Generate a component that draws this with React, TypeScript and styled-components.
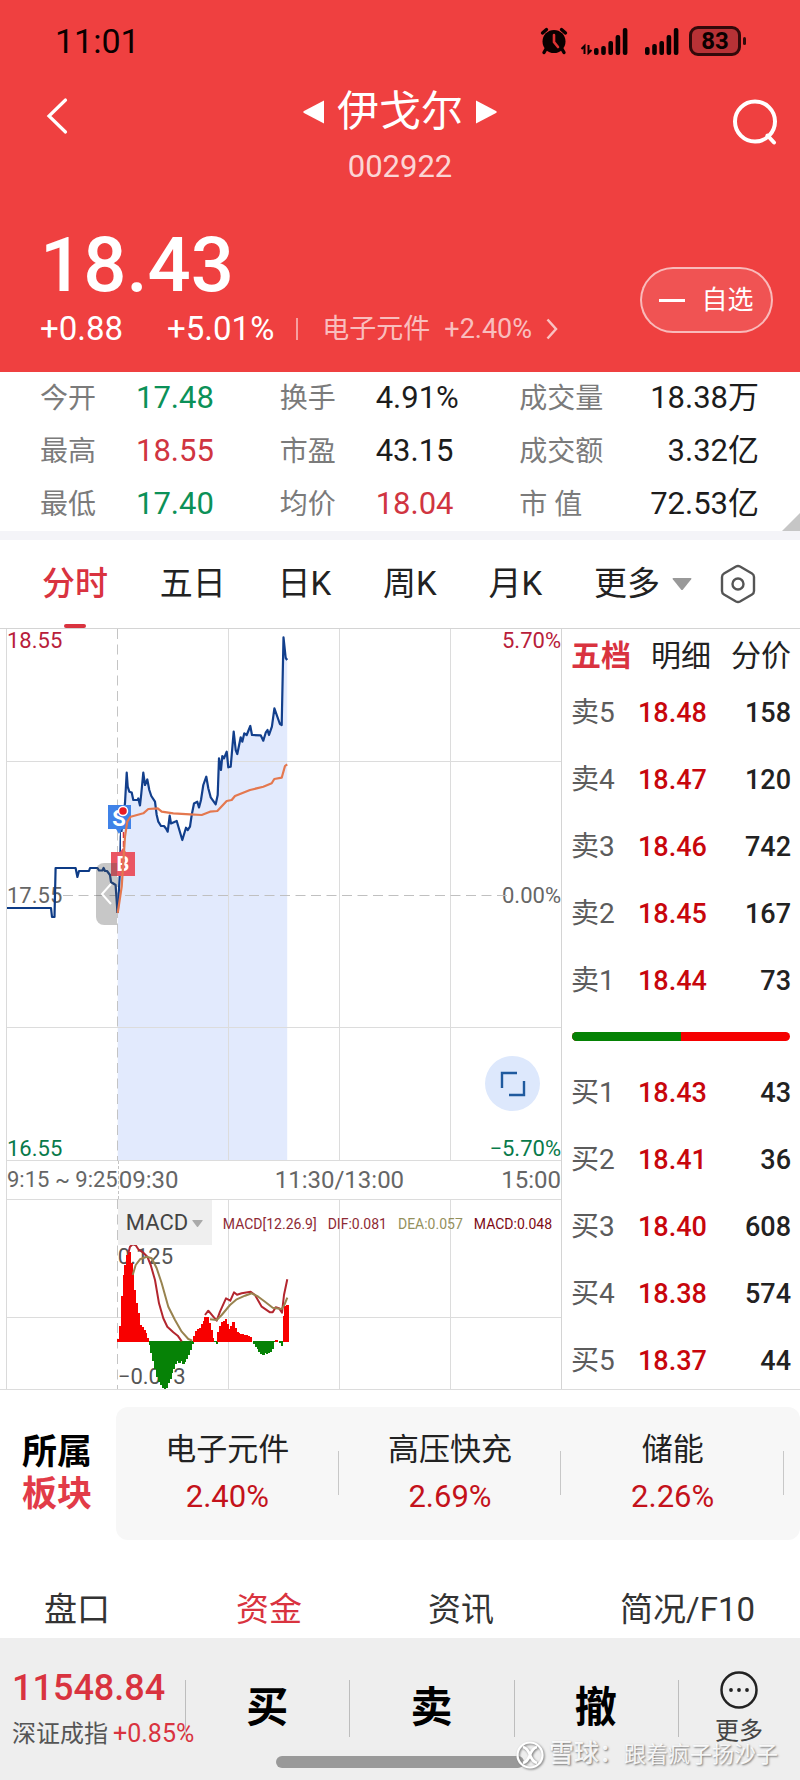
import React from "react";
import styled, { createGlobalStyle, css } from "styled-components";

const GlobalStyle = createGlobalStyle`
  *, *::before, *::after { box-sizing: border-box; }
  body {
    margin: 0;
    background: #fff;
    color: #222;
    font-family: Roboto, "Noto Sans CJK SC", sans-serif;
    line-height: 1.25;
  }
  h1, p, dl, dd, dt { margin: 0; font-weight: 400; }
  button, select {
    margin: 0;
    padding: 0;
    border: 0;
    background: none;
    color: inherit;
    font: inherit;
    cursor: pointer;
  }
  a { color: inherit; text-decoration: none; }
  svg { display: block; flex: none; }
`;

const RED = "#d9333f";
const GREEN = "#0b9158";

type Tone = "up" | "down" | "plain";
const toneColor: Record<Tone, string> = { up: "#d03541", down: GREEN, plain: "#1c1c1c" };

/* ---------- Header ---------- */

const Header = styled.header`
  background: #ef4040;
  color: #fff;
  padding-bottom: 23px;
`;

const StatusBar = styled.div`
  display: flex;
  align-items: center;
  justify-content: space-between;
  height: 82px;
  padding: 0 54px 0 55px;
  color: #0a0000;
  font-size: 34px;
`;

const StatusIcons = styled.div`
  display: flex;
  align-items: center;
  gap: 12px;
`;

const BatteryBox = styled.div`
  position: relative;
  width: 52px;
  height: 30px;
  margin: 0 5px 0 -2px;
  border: 3px solid #33090a;
  border-radius: 9px;
  background: #b83236;
  color: #0a0000;
  font-size: 24px;
  font-weight: 700;
  line-height: 24px;
  text-align: center;

  &::after {
    content: "";
    position: absolute;
    right: -8px;
    top: 8px;
    width: 3px;
    height: 8px;
    border-radius: 2px;
    background: #33090a;
  }
`;

const NavBar = styled.nav`
  display: grid;
  grid-template-columns: 1fr auto 1fr;
  align-items: start;
  padding-top: 5px;
`;

const NavButton = styled.button<{ $end?: boolean }>`
  justify-self: ${(p) => (p.$end ? "end" : "start")};
  margin: ${(p) => (p.$end ? "12px 22px 0 0" : "10px 0 0 46px")};
`;

const TitleBlock = styled.div`
  display: flex;
  flex-direction: column;
  align-items: center;
  gap: 10px;
`;

const TitleRow = styled.div`
  display: flex;
  align-items: center;
  gap: 12px;
`;

const StockName = styled.h1`
  font-size: 42px;
  line-height: 50px;
`;

const StockCode = styled.p`
  font-size: 31px;
  line-height: 40px;
  color: rgba(255, 255, 255, 0.8);
`;

const QuoteBar = styled.div`
  display: flex;
  justify-content: space-between;
  align-items: flex-end;
  padding: 38px 27px 0 40px;
`;

const LastPrice = styled.p`
  font-size: 76px;
  font-weight: 500;
  line-height: 80px;
  margin-bottom: 4px;
`;

const ChangeRow = styled.div`
  display: flex;
  align-items: center;
  line-height: 40px;
  font-size: 33px;
`;

const ChangeValue = styled.span`
  margin-right: 44px;
  & + & { margin-right: 22px; }
`;

const IndustryLink = styled.a`
  display: flex;
  align-items: center;
  gap: 14px;
  font-size: 27px;
  color: rgba(255, 255, 255, 0.68);

  &::before {
    content: "";
    width: 2px;
    height: 22px;
    margin-right: 10px;
    background: rgba(255, 255, 255, 0.5);
  }
`;

const FavoriteButton = styled.button`
  display: flex;
  align-items: center;
  justify-content: center;
  gap: 16px;
  width: 133px;
  height: 66px;
  margin-bottom: 16px;
  border: 2px solid rgba(255, 255, 255, 0.6);
  border-radius: 33px;
  background: rgba(255, 255, 255, 0.1);
  font-size: 26px;

  &::before {
    content: "";
    width: 26px;
    height: 3px;
    background: #fff;
  }
`;

/* ---------- Key figures ---------- */

const Stats = styled.dl`
  position: relative;
  display: grid;
  grid-template-columns: repeat(3, 1fr);
  padding: 0 41px 0 40px;
  border-bottom: 9px solid #f4f4f8;

  &::after {
    content: "";
    position: absolute;
    right: 0;
    bottom: 0;
    border: 9px solid #c6c6c6;
    border-top-color: transparent;
    border-left-color: transparent;
  }
`;

const Stat = styled.div<{ $spread?: boolean }>`
  display: flex;
  align-items: center;
  justify-content: ${(p) => (p.$spread ? "space-between" : "flex-start")};
  height: 53px;
  white-space: nowrap;
`;

const StatLabel = styled.dt`
  min-width: 96px;
  font-size: 28px;
  color: #7b7b7b;
`;

const StatValue = styled.dd<{ $tone: Tone }>`
  font-size: 31px;
  color: ${(p) => toneColor[p.$tone]};
`;

/* ---------- Period tabs ---------- */

const PeriodBar = styled.div`
  display: flex;
  align-items: center;
  gap: 28px;
  height: 88px;
  padding: 0 44px 0 42px;
`;

const PeriodTabs = styled.div`
  flex: 1;
  display: flex;
  justify-content: space-between;
`;

const PeriodTab = styled.button<{ $active?: boolean }>`
  position: relative;
  display: flex;
  align-items: center;
  gap: 12px;
  height: 88px;
  font-size: 33px;
  color: ${(p) => (p.$active ? RED : "#222")};
  font-weight: ${(p) => (p.$active ? 500 : 400)};

  ${(p) =>
    p.$active &&
    css`
      &::after {
        content: "";
        position: absolute;
        left: 22px;
        bottom: 0;
        width: 22px;
        height: 4px;
        border-radius: 2px;
        background: ${RED};
      }
    `}
`;

/* ---------- Market area ---------- */

const Market = styled.section`
  display: grid;
  grid-template-columns: minmax(0, 1fr) 239px;
  padding-left: 6px;
  border-top: 1px solid #d4d4d4;
  border-bottom: 1px solid #dcdcdc;
`;

const ChartColumn = styled.div`
  border-left: 1px solid #dadada;
`;

const Pane = styled.div`
  position: relative;
  & > svg {
    position: relative;
    width: 100%;
    height: auto;
  }
`;

const ScaleLabel = styled.span<{ $side: "left" | "right"; $at: "top" | "middle" | "bottom"; $color: string }>`
  position: absolute;
  ${(p) => p.$side}: 0;
  ${(p) => (p.$at === "middle" ? "top: 50%; margin-top: -11px;" : `${p.$at}: 0;`)}
  font-size: 22px;
  line-height: 24px;
  color: ${(p) => p.$color};
`;

const CollapseHandle = styled.button`
  position: absolute;
  left: 16%;
  top: 44%;
  width: 21px;
  height: 62px;
  display: grid;
  place-items: center;
  border-radius: 8px 0 0 8px;
  background: rgba(80, 80, 80, 0.32);
`;

const ExpandButton = styled.button`
  position: absolute;
  right: 21px;
  bottom: 50px;
  display: grid;
  place-items: center;
  width: 55px;
  height: 55px;
  border-radius: 50%;
  background: #dde8fc;
`;

const TimeAxis = styled.div`
  display: grid;
  grid-template-columns: repeat(5, 1fr);
  align-items: center;
  height: 38px;
  font-size: 24px;
  color: #666;
  white-space: nowrap;
`;

const AuctionTime = styled.span`
  font-size: 22px;
`;

const OpenTime = styled.span`
  height: 38px;
  line-height: 38px;
  border-left: 1px dashed #c4c4c4;
`;

const MiddayTime = styled.span`
  grid-column: span 2;
  text-align: center;
`;

const CloseTime = styled.span`
  text-align: right;
`;

const IndicatorBar = styled.div`
  position: absolute;
  z-index: 1;
  left: 20%;
  right: 0;
  top: 1px;
  display: flex;
  align-items: center;
  gap: 11px;
  white-space: nowrap;
`;

const IndicatorPicker = styled.label`
  position: relative;
  display: block;
  background: #efefef;
  color: #444;

  select {
    appearance: none;
    display: block;
    width: 94px;
    height: 45px;
    padding-left: 8px;
    font-size: 22px;
  }
  svg {
    position: absolute;
    right: 9px;
    top: 20px;
    pointer-events: none;
  }
`;

const IndicatorValue = styled.span<{ $color: string }>`
  padding-top: 4px;
  font-size: 14px;
  color: ${(p) => p.$color};
`;

const MacdScale = styled.span<{ $low?: boolean }>`
  position: absolute;
  left: 20%;
  ${(p) => (p.$low ? "bottom: 0;" : "top: 46px;")}
  font-size: 22px;
  line-height: 24px;
  color: #555;
`;

/* ---------- Order book ---------- */

const Book = styled.aside`
  border-left: 1px solid #d4d4d4;
  padding: 7px 9px 12px;
`;

const BookTabs = styled.div`
  display: flex;
  justify-content: space-between;
  margin-bottom: 21px;
`;

const BookTab = styled.button<{ $active?: boolean }>`
  font-size: 30px;
  line-height: 40px;
  font-weight: ${(p) => (p.$active ? 700 : 400)};
  color: ${(p) => (p.$active ? RED : "#222")};
`;

const Levels = styled.table`
  width: 100%;
  border-collapse: collapse;
  font-size: 27px;
  line-height: 32px;

  th, td { padding: 0; text-align: left; font-weight: 500; }
  tr + tr > * { padding-top: 35px; }
`;

const LevelName = styled.th`
  width: 67px;
  && { font-weight: 400; }
  font-size: 28px;
  color: #5c5c5c;
`;

const LevelPrice = styled.td`
  color: #c8060c;
`;

const LevelVolume = styled.td`
  && { text-align: right; }
`;

const RatioBar = styled.div`
  display: flex;
  height: 9px;
  margin: 35px 1px 36px;
  border-radius: 5px;
  overflow: hidden;
  background: #f50000;

  &::before {
    content: "";
    width: 50%;
    background: #058205;
  }
`;

/* ---------- Sectors ---------- */

const Sectors = styled.section`
  display: flex;
  align-items: center;
  margin-top: 17px;
`;

const SectorTitle = styled.p`
  flex: none;
  width: 116px;
  padding-left: 22px;
  font-size: 35px;
  font-weight: 700;
  line-height: 42px;
  color: #000;

  span { display: block; color: #e23b48; }
`;

const SectorList = styled.div`
  flex: 1;
  display: grid;
  grid-template-columns: repeat(3, 1fr);
  align-items: center;
  height: 133px;
  padding-right: 16px;
  border-radius: 12px;
  background: #f7f7f7;
`;

const SectorItem = styled.a`
  position: relative;
  display: flex;
  flex-direction: column;
  align-items: center;
  gap: 11px;
  font-size: 31px;
  line-height: 36px;

  &::after {
    content: "";
    position: absolute;
    right: 0;
    top: 19px;
    width: 1px;
    height: 44px;
    background: #c8c8c8;
  }
  span { color: #c4121b; }
`;

/* ---------- Info tabs ---------- */

const InfoTabs = styled.div`
  display: flex;
  justify-content: space-between;
  padding: 50px 45px 8px 44px;
`;

const InfoTab = styled.button<{ $active?: boolean }>`
  font-size: 33px;
  line-height: 40px;
  color: ${(p) => (p.$active ? RED : "#333")};
`;

/* ---------- Footer ---------- */

const Footer = styled.footer`
  position: relative;
  padding: 30px 0 12px;
  background: #eee;
`;

const TradeRow = styled.div`
  display: grid;
  grid-template-columns: 185px repeat(3, 1fr) 122px;
  height: 80px;
  margin-bottom: 8px;
`;

const MarketIndex = styled.a`
  display: flex;
  flex-direction: column;
  gap: 12px;
  padding-left: 12px;
  font-size: 24px;
  line-height: 28px;
  color: #555;
  white-space: nowrap;

  strong {
    font-size: 36px;
    font-weight: 500;
    line-height: 40px;
    color: ${RED};
  }
  em { margin-left: 5px; font-size: 25px; font-style: normal; color: ${RED}; }
`;

const TradeCell = styled.button<{ $small?: boolean }>`
  position: relative;
  display: flex;
  flex-direction: column;
  align-items: center;
  justify-content: center;
  gap: 8px;
  color: ${(p) => (p.$small ? "#444" : "#000")};
  font-size: ${(p) => (p.$small ? 24 : 42)}px;
  font-weight: ${(p) => (p.$small ? 400 : 700)};
  line-height: ${(p) => (p.$small ? 28 : 48)}px;

  &::before {
    content: "";
    position: absolute;
    left: 0;
    top: 12px;
    width: 1px;
    height: 57px;
    background: #bdbdbd;
  }
`;

const HomeIndicator = styled.div`
  width: 31%;
  height: 12px;
  margin: 0 auto;
  border-radius: 6px;
  background: #999;
`;

const Watermark = styled.div`
  position: absolute;
  right: 22px;
  bottom: 11px;
  display: flex;
  align-items: center;
  gap: 5px;
  font-size: 22px;
  line-height: 28px;
  color: rgba(255, 255, 255, 0.9);
  text-shadow: 1px 1px 2px #777;

  strong { font-size: 25px; font-weight: 500; }
  svg { filter: drop-shadow(1px 1px 1px #777); }
`;

/* ---------- Icons ---------- */

const AlarmIcon = () => (
  <svg width="28" height="28" viewBox="0 0 28 28">
    <path d="M2.500 6 6.500 2.500M21.500 2.500l4 3.500M6 22l-2 3.500M22 22l2 3.500" stroke="#0a0000" strokeWidth="3.400" strokeLinecap="round" />
    <circle cx="14" cy="14.500" r="11.500" fill="#0a0000" />
    <path d="M14 8v7l4 5" stroke="#d33" strokeWidth="2.600" fill="none" strokeLinecap="round" />
  </svg>
);

const SignalIcon = ({ data = false }: { data?: boolean }) => {
  const bars = data ? [7, 9, 14, 20, 27] : [8, 11, 14, 20, 27];
  const x0 = data ? 14 : 0;
  const width = data ? 53 : 34;
  return (
    <svg width={width} height="28" viewBox={`0 0 ${width} 28`} stroke="#0a0000" fill="none">
      {data && <path d="M4.500 27v-8l-3 3M8.500 18v8l3-3" strokeWidth="2" />}
      {bars.map((h, i) => (
        <rect key={i} x={x0 + i * 7.2} y={28 - h} width="4.600" height={h} rx="2" fill="#0a0000" stroke="none" />
      ))}
    </svg>
  );
};

const BackIcon = () => (
  <svg width="22" height="38" viewBox="0 0 22 38" fill="none" stroke="#fff" strokeWidth="3.200" strokeLinecap="round">
    <path d="M19.500 3 3 19l16.500 16" />
  </svg>
);

const SearchIcon = () => (
  <svg width="45" height="46" viewBox="0 0 45 46" fill="none" stroke="#fff" strokeWidth="4" strokeLinecap="round">
    <circle cx="22" cy="22.500" r="20" />
    <path d="m34.500 36.500 6.500 7" />
  </svg>
);

const SideArrow = ({ right = false }: { right?: boolean }) => (
  <svg width="22" height="26" viewBox="0 0 22 26" fill="#fff">
    <path d={right ? "M1 1.500v23L21 14q1.500-1 0-2z" : "M21 1.500v23L1 14q-1.500-1 0-2z"} />
  </svg>
);

const ChevronRight = () => (
  <svg width="12" height="22" viewBox="0 0 12 22" fill="none" stroke="currentColor" strokeWidth="2.500">
    <path d="m1.500 1.500 8.500 9.500-8.500 9.500" />
  </svg>
);

const CaretDown = ({ width, height, fill }: { width: number; height: number; fill: string }) => (
  <svg width={width} height={height} viewBox="0 0 20 12" preserveAspectRatio="none" fill={fill}>
    <path d="M1.500 0h17q1.500 0 .7 1.200L11 11.500q-1 1-2 0L.8 1.200Q0 0 1.500 0z" />
  </svg>
);

const HexIcon = () => (
  <svg width="36" height="40" viewBox="0 0 36 40" fill="none" stroke="#555" strokeWidth="2.400" strokeLinejoin="round">
    <path d="M16 2.500q2-1 4 0l12 7q2 1.200 2 3.500v14q0 2.300-2 3.500l-12 7q-2 1-4 0l-12-7q-2-1.200-2-3.500V13q0-2.300 2-3.500z" />
    <circle cx="18" cy="20" r="5.500" />
  </svg>
);

const MoreIcon = () => (
  <svg width="38" height="38" viewBox="0 0 38 38" fill="none" stroke="#222" strokeWidth="2.500">
    <circle cx="19" cy="19" r="17.500" />
    <g fill="#222" stroke="none">
      <circle cx="11" cy="19" r="1.900" />
      <circle cx="19" cy="19" r="1.900" />
      <circle cx="27" cy="19" r="1.900" />
    </g>
  </svg>
);

const SnowballLogo = () => (
  <svg width="28" height="28" viewBox="0 0 28 28" fill="none" stroke="#fff" strokeWidth="2.200">
    <circle cx="14" cy="14" r="12.500" />
    <path d="M7 6c4 1 5.500 4 7 8s3 7 7 8M21 6c-4 1-5.500 4-7 8s-3 7-7 8" strokeWidth="2.800" />
  </svg>
);

/* ---------- Chart data ---------- */

const preOpen =
  "0,279 44,279 45,288 47.5,288 48.600,239 68.600,239 70.400,248 72,242 82,242 83,239 90.500,239 92,241.500 95.500,241.500 96.600,239 98,242 100,242 103,246 104,253 108.600,256 110.500,284";

const price =
  "110.700,284 113,241 113.700,208 118,174 119.700,143.700 120.700,157.700 122.300,162.700 124.700,163.500 126.300,171 130.700,171 131.300,169.500 133,176.500 134.300,164.500 136.300,143.700 138,156 140.300,150.500 142.300,161 144.300,167 148,172.700 149.700,186 151.300,192.700 154,197 157,197 159,199.500 160.700,202.700 162.700,186.700 164,194.500 169.700,192 175.300,211 179,198.700 180.700,201 183,197.700 184.700,186 187,174.500 190.300,172.700 192,178.500 194,171 196.300,156 199.300,147.700 201.300,159.300 203.700,168.300 208.700,175.300 210.700,166 212,129.300 214,141 215.300,127 217,129.300 219.700,122.700 221.300,138.300 223.700,137.700 226.700,102.700 228.700,121 230.300,125 233.700,108.300 235.300,112.700 237.300,104.300 239.700,106 243.300,97 245,106 253.700,106.300 256.300,111.700 258.700,103.700 260.500,101 262,106 264.900,97.700 267.400,79.300 272.900,95 274.700,96 276.500,8.300 278.700,29 280.200,31";

const average =
  "110.700,284 114.700,257.700 118,207.700 120.300,192.700 123.700,187.700 136.300,184.300 141.300,180 150.700,179.300 154.700,182.700 166.300,184.300 183,185.300 194.700,186 203,182.700 210.300,182 219.700,172 224.700,171 228,167 243,161 256.300,157.700 264.700,154.300 267.300,150 274.700,148.700 278,137 280.200,135.300";

const dif = [
  "121.300,54.300 123,47.700 125.700,45.300 128.700,46.300 131.300,50.300 136.300,53.700 140.300,57.700 143.700,66 148,81 152,104.300 156.300,119.300 160.300,127.700 166.300,133.300 170.700,136.700 174.700,142.300",
  "198,116 201.300,111.700 206.300,117.700 209.700,121.700 213,112.700 219,99.300 223.300,101.700 227,93.300 230,95.700 234.700,94.300 243.700,92.700 248,96 254.700,107.700 263,113.300 265.700,113.300 268.700,108.300 272,109.300 275,113.700 277,96 280.300,80.300",
];

const dea = [
  "125.700,76 128.700,66 133,60.300 139.700,57.700 144.700,59.300 149.700,69.300 154.700,84.300 161.300,107.700 168,121 174.700,132.700 181.300,140 185.300,141.700",
  "203,120.300 209.700,121 214.700,116 223,106 229.700,100.300 238,96.700 244.700,94.300 251.300,97.700 258,102.700 265.700,108.700 274.700,110 277.300,106 280.300,98.700",
];

const histogram = [
  2, 15, 45, 66, 76, 86, 89, 78, 68, 51, 38, 28, 16, 14, 11, 8, 3,
  -4, -12, -20, -28, -36, -41, -44, -47, -48, -47, -42, -38, -32, -28, -23, -20, -22, -20, -23, -21, -18, -14, -9, -3,
  5, 10, 12, 13, 17, 20, 24, 24, 18, 11, 3, -1, -3,
  9, 15, 19, 20, 22, 17, 12, 15, 19, 13, 9, 8, 7, 7, 6, 6, 5, 4,
  0, -3, -6, -8, -11, -13, -14, -12, -13, -12, -11, -8, -1, 1, 0, -2, -5, 25, 35, 36,
];

const GridLines = ({ height, rows }: { height: number; rows: number[] }) => (
  <g stroke="#dcdcdc">
    {[222, 333, 444].map((x) => (
      <path key={x} d={`M${x - 0.5} 0V${height}`} />
    ))}
    {rows.map((y) => (
      <path key={y} d={`M0 ${y - 0.5}H554`} />
    ))}
    <path d={`M110.500 0V${height}`} stroke="#c4c4c4" strokeDasharray="10 5.500" />
  </g>
);

const PriceChart = () => (
  <svg viewBox="0 0 554 532" role="img" aria-label="分时走势">
    <polygon points={`${price} 280.200,532 110.700,532`} fill="#e2eafd" />
    <GridLines height={532} rows={[133, 399, 532]} />
    <path d="M56 266.500H504" stroke="#c0c0c0" strokeDasharray="10 5.500" />
    <g fill="none" strokeWidth="2.200" strokeLinejoin="round">
      <polyline points={preOpen} stroke="#0d3b86" />
      <polyline points={price} stroke="#123f8c" />
    </g>
    <path d="M101 176h23v24h-9l-3 5-3-5h-8z" fill="#3f82e8" />
    <text x="112" y="197" textAnchor="middle" fontSize="22" fontWeight="700" fill="#fff">S</text>
    <path d="M115.500 203v20" stroke="#fff" strokeWidth="3" />
    <path d="M116.500 203v20" stroke="#d9333f" strokeWidth="1.500" strokeDasharray="6 3" />
    <path d="M104 223h9l3-4 3 4h9v24h-24z" fill="#ea5663" />
    <text x="116" y="242" textAnchor="middle" fontSize="20" fontWeight="700" fill="#fff">B</text>
    <polyline points={average} fill="none" stroke="#e4784f" strokeWidth="2.200" strokeLinejoin="round" />
    <circle cx="116" cy="182" r="4.500" fill="#ea1c24" stroke="#fff" strokeWidth="1.500" />
  </svg>
);

const MacdChart = () => (
  <svg viewBox="0 0 554 190" role="img" aria-label="MACD">
    <GridLines height={190} rows={[1, 119]} />
    <g shapeRendering="crispEdges">
      {histogram.map((v, i) => (
        <rect
          key={i}
          x={110 + i * 1.86}
          y={v > 0 ? 142 - v : 142}
          width="2.500"
          height={Math.abs(v) + (v > 0 ? 1 : 0)}
          fill={v > 0 ? "#f80000" : "#068206"}
        />
      ))}
    </g>
    <g fill="none" strokeWidth="2" strokeLinejoin="round">
      {dif.map((points) => (
        <polyline key={points} points={points} stroke="#b3262e" />
      ))}
      {dea.map((points) => (
        <polyline key={points} points={points} stroke="#98834f" />
      ))}
    </g>
  </svg>
);

/* ---------- Page data ---------- */

const stats: { label: string; value: string; tone: Tone }[] = [
  { label: "今开", value: "17.48", tone: "down" },
  { label: "换手", value: "4.91%", tone: "plain" },
  { label: "成交量", value: "18.38万", tone: "plain" },
  { label: "最高", value: "18.55", tone: "up" },
  { label: "市盈", value: "43.15", tone: "plain" },
  { label: "成交额", value: "3.32亿", tone: "plain" },
  { label: "最低", value: "17.40", tone: "down" },
  { label: "均价", value: "18.04", tone: "up" },
  { label: "市 值", value: "72.53亿", tone: "plain" },
];

type Level = [name: string, price: string, volume: number];

const asks: Level[] = [
  ["卖5", "18.48", 158],
  ["卖4", "18.47", 120],
  ["卖3", "18.46", 742],
  ["卖2", "18.45", 167],
  ["卖1", "18.44", 73],
];

const bids: Level[] = [
  ["买1", "18.43", 43],
  ["买2", "18.41", 36],
  ["买3", "18.40", 608],
  ["买4", "18.38", 574],
  ["买5", "18.37", 44],
];

const sectors = [
  ["电子元件", "2.40%"],
  ["高压快充", "2.69%"],
  ["储能", "2.26%"],
];

const LevelTable = ({ levels, label }: { levels: Level[]; label: string }) => (
  <Levels aria-label={label}>
    <tbody>
      {levels.map(([name, value, volume]) => (
        <tr key={name}>
          <LevelName scope="row">{name}</LevelName>
          <LevelPrice>{value}</LevelPrice>
          <LevelVolume>{volume}</LevelVolume>
        </tr>
      ))}
    </tbody>
  </Levels>
);

export default function App() {
  return (
    <>
      <GlobalStyle />
      <Header>
        <StatusBar>
          <span>11:01</span>
          <StatusIcons>
            <AlarmIcon />
            <SignalIcon data />
            <SignalIcon />
            <BatteryBox>83</BatteryBox>
          </StatusIcons>
        </StatusBar>
        <NavBar>
          <NavButton aria-label="返回"><BackIcon /></NavButton>
          <TitleBlock>
            <TitleRow>
              <button aria-label="上一只"><SideArrow /></button>
              <StockName>伊戈尔</StockName>
              <button aria-label="下一只"><SideArrow right /></button>
            </TitleRow>
            <StockCode>002922</StockCode>
          </TitleBlock>
          <NavButton $end aria-label="搜索"><SearchIcon /></NavButton>
        </NavBar>
        <QuoteBar>
          <div>
            <LastPrice>18.43</LastPrice>
            <ChangeRow>
              <ChangeValue>+0.88</ChangeValue>
              <ChangeValue>+5.01%</ChangeValue>
              <IndustryLink href="#industry">
                <span>电子元件</span>
                <span>+2.40%</span>
                <ChevronRight />
              </IndustryLink>
            </ChangeRow>
          </div>
          <FavoriteButton>自选</FavoriteButton>
        </QuoteBar>
      </Header>

      <Stats>
        {stats.map((s, i) => (
          <Stat key={s.label} $spread={i % 3 === 2}>
            <StatLabel>{s.label}</StatLabel>
            <StatValue $tone={s.tone}>{s.value}</StatValue>
          </Stat>
        ))}
      </Stats>

      <PeriodBar>
        <PeriodTabs>
          <PeriodTab $active>分时</PeriodTab>
          <PeriodTab>五日</PeriodTab>
          <PeriodTab>日K</PeriodTab>
          <PeriodTab>周K</PeriodTab>
          <PeriodTab>月K</PeriodTab>
          <PeriodTab aria-haspopup="menu">
            更多
            <CaretDown width={20} height={12} fill="#999" />
          </PeriodTab>
        </PeriodTabs>
        <button aria-label="设置"><HexIcon /></button>
      </PeriodBar>

      <Market>
        <ChartColumn>
          <Pane>
            <ScaleLabel $side="left" $at="top" $color="#b8203a">18.55</ScaleLabel>
            <ScaleLabel $side="right" $at="top" $color="#b8203a">5.70%</ScaleLabel>
            <ScaleLabel $side="left" $at="middle" $color="#666">17.55</ScaleLabel>
            <ScaleLabel $side="right" $at="middle" $color="#666">0.00%</ScaleLabel>
            <ScaleLabel $side="left" $at="bottom" $color="#087a4a">16.55</ScaleLabel>
            <ScaleLabel $side="right" $at="bottom" $color="#087a4a">−5.70%</ScaleLabel>
            <PriceChart />
            <CollapseHandle aria-label="收起竞价">
              <svg width="12" height="22" viewBox="0 0 12 22" fill="none" stroke="#fff" strokeWidth="2">
                <path d="M11 1 2 11l9 10" />
              </svg>
            </CollapseHandle>
            <ExpandButton aria-label="全屏">
              <svg width="26" height="26" viewBox="0 0 26 26" fill="none" stroke="#1f5a9e" strokeWidth="2.400">
                <path d="M2 17V2h15M24 10v14H9" />
              </svg>
            </ExpandButton>
          </Pane>
          <TimeAxis>
            <AuctionTime>9:15 ~ 9:25</AuctionTime>
            <OpenTime>09:30</OpenTime>
            <MiddayTime>11:30/13:00</MiddayTime>
            <CloseTime>15:00</CloseTime>
          </TimeAxis>
          <Pane>
            <MacdScale>0.125</MacdScale>
            <MacdScale $low>−0.073</MacdScale>
            <MacdChart />
            <IndicatorBar>
              <IndicatorPicker>
                <select aria-label="指标" defaultValue="MACD">
                  <option>MACD</option>
                </select>
                <CaretDown width={11} height={7} fill="#aaa" />
              </IndicatorPicker>
              <IndicatorValue $color="#8e2a35">MACD[12.26.9]</IndicatorValue>
              <IndicatorValue $color="#8e2a35">DIF:0.081</IndicatorValue>
              <IndicatorValue $color="#94905c">DEA:0.057</IndicatorValue>
              <IndicatorValue $color="#7d0a14">MACD:0.048</IndicatorValue>
            </IndicatorBar>
          </Pane>
        </ChartColumn>
        <Book>
          <BookTabs>
            <BookTab $active>五档</BookTab>
            <BookTab>明细</BookTab>
            <BookTab>分价</BookTab>
          </BookTabs>
          <LevelTable levels={asks} label="卖盘" />
          <RatioBar />
          <LevelTable levels={bids} label="买盘" />
        </Book>
      </Market>

      <Sectors>
        <SectorTitle>
          所属<span>板块</span>
        </SectorTitle>
        <SectorList>
          {sectors.map(([name, change]) => (
            <SectorItem key={name} href="#sector">
              {name}
              <span>{change}</span>
            </SectorItem>
          ))}
        </SectorList>
      </Sectors>

      <InfoTabs>
        <InfoTab>盘口</InfoTab>
        <InfoTab $active>资金</InfoTab>
        <InfoTab>资讯</InfoTab>
        <InfoTab>简况/F10</InfoTab>
      </InfoTabs>

      <Footer>
        <TradeRow>
          <MarketIndex href="#index">
            <strong>11548.84</strong>
            <span>深证成指<em>+0.85%</em></span>
          </MarketIndex>
          <TradeCell>买</TradeCell>
          <TradeCell>卖</TradeCell>
          <TradeCell>撤</TradeCell>
          <TradeCell $small>
            <MoreIcon />
            更多
          </TradeCell>
        </TradeRow>
        <HomeIndicator />
        <Watermark>
          <SnowballLogo />
          <span><strong>雪球：</strong>跟着疯子扬沙子</span>
        </Watermark>
      </Footer>
    </>
  );
}
